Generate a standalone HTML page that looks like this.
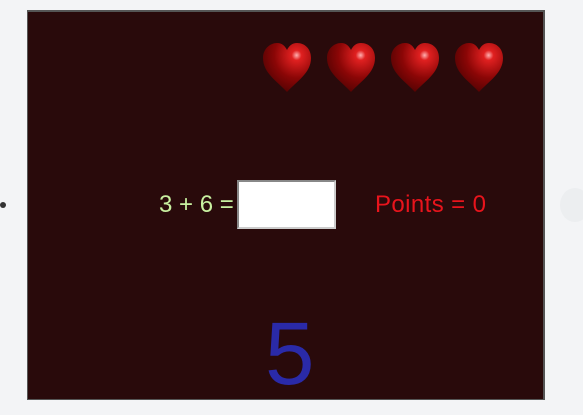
<!DOCTYPE html>
<html><head><style>
body{margin:0;width:583px;height:415px;background:#f3f4f6;position:relative;overflow:hidden;font-family:"Liberation Sans",sans-serif}
#p{position:absolute;left:27px;top:10px;width:515px;height:387px;background:#290a0b;border:1px solid #555;border-top-width:2px;border-right-width:2px}
.h{position:absolute;top:43px;width:50px;height:50px}
.t{position:absolute;line-height:1;white-space:nowrap}
</style></head><body>
<div style="position:absolute;left:0;top:202px;width:6px;height:6px;border-radius:50%;background:#333"></div>
<div style="position:absolute;left:560px;top:188px;width:30px;height:34px;border-radius:50%;background:#eceef0"></div>
<div id="p"></div>
<svg width="0" height="0" style="position:absolute"><defs>
<radialGradient id="g" cx="0.7" cy="0.25" r="0.85"><stop offset="0" stop-color="#ffb0b0"/><stop offset="0.12" stop-color="#e02020"/><stop offset="0.55" stop-color="#8a0606"/><stop offset="1" stop-color="#4a0202"/></radialGradient></defs></svg>
<svg class="h" style="left:262px" viewBox="0 0 50 50"><path d="M25 49 C15 38 1 30 1 15 C1 6 8 0 15 0 C20 0 23 3 25 7 C27 3 30 0 35 0 C43 0 49 6 49 15 C49 30 35 38 25 49Z" fill="url(#g)"/></svg>
<svg class="h" style="left:326px" viewBox="0 0 50 50"><path d="M25 49 C15 38 1 30 1 15 C1 6 8 0 15 0 C20 0 23 3 25 7 C27 3 30 0 35 0 C43 0 49 6 49 15 C49 30 35 38 25 49Z" fill="url(#g)"/></svg>
<svg class="h" style="left:390px" viewBox="0 0 50 50"><path d="M25 49 C15 38 1 30 1 15 C1 6 8 0 15 0 C20 0 23 3 25 7 C27 3 30 0 35 0 C43 0 49 6 49 15 C49 30 35 38 25 49Z" fill="url(#g)"/></svg>
<svg class="h" style="left:454px" viewBox="0 0 50 50"><path d="M25 49 C15 38 1 30 1 15 C1 6 8 0 15 0 C20 0 23 3 25 7 C27 3 30 0 35 0 C43 0 49 6 49 15 C49 30 35 38 25 49Z" fill="url(#g)"/></svg>
<div class="t" style="left:159px;top:193px;font-size:24px;color:#c8f0a0">3 + 6 =</div>
<div style="position:absolute;left:237px;top:180px;width:95px;height:45px;background:#fff;border:2px solid #888;border-bottom-color:#ccc;border-right-color:#ccc"></div>
<div class="t" style="left:375px;top:193px;font-size:24px;color:#e8141c;letter-spacing:0.4px">Points = 0</div>
<div style="position:absolute;left:265px;top:309px;font-size:89px;line-height:1;color:#2a2aa8">5</div>
</body></html>
